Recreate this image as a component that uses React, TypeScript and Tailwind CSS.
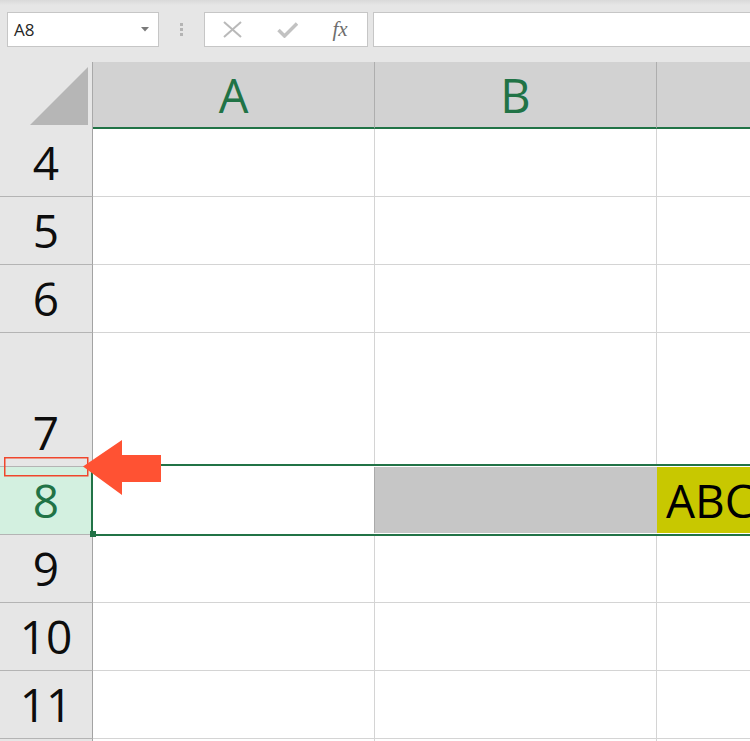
import React from "react";

const GREEN = "#217346";

type Row = { n: number | null; h: string; selected?: boolean };

const rows: Row[] = [
  { n: 4, h: "h-[68px]" },
  { n: 5, h: "h-[68px]" },
  { n: 6, h: "h-[68px]" },
  { n: 7, h: "h-[134px]" },
  { n: 8, h: "h-[68px]", selected: true },
  { n: 9, h: "h-[68px]" },
  { n: 10, h: "h-[68px]" },
  { n: 11, h: "h-[68px]" },
  { n: null, h: "h-[68px]" },
];

function Toolbar() {
  return (
    <div className="flex h-[62px] items-start pt-[12px] pl-[7px] bg-[linear-gradient(to_bottom,#d9d9d9_0px,#e6e6e6_5px)]">
      {/* Name box */}
      <div className="flex h-[35px] w-[152px] items-center justify-between border border-[#c6c6c6] bg-white pl-[6px] pr-[9px]">
        <span className="text-[17px] leading-none text-[#262626]">A8</span>
        <svg width="8" height="5" viewBox="0 0 8 5">
          <polygon points="0,0 8,0 4,4.5" fill="#7a7a7a" />
        </svg>
      </div>
      {/* separator dots */}
      <div className="flex h-[35px] w-[45px] flex-col items-center justify-center gap-[2px]">
        <div className="h-[3px] w-[3px] bg-[#b4b4b4]" />
        <div className="h-[3px] w-[3px] bg-[#b4b4b4]" />
        <div className="h-[3px] w-[3px] bg-[#b4b4b4]" />
      </div>
      {/* cancel / enter / fx */}
      <div className="flex h-[35px] w-[164px] items-center border border-[#c6c6c6] bg-white">
        <div className="flex w-[55px] justify-center">
          <svg width="19" height="17" viewBox="0 0 19 17">
            <line x1="1" y1="1" x2="18" y2="16" stroke="#b9b9b9" strokeWidth="2" />
            <line x1="18" y1="1" x2="1" y2="16" stroke="#b9b9b9" strokeWidth="2" />
          </svg>
        </div>
        <div className="flex w-[55px] justify-center">
          <svg width="21" height="16" viewBox="0 0 21 16">
            <polyline points="1.5,8 7.5,14 20,1.5" fill="none" stroke="#c2c2c2" strokeWidth="3.5" />
          </svg>
        </div>
        <div className="flex w-[50px] justify-center">
          <span className="font-['Liberation_Serif',serif] text-[21px] italic leading-none text-[#6e6e6e]">
            fx
          </span>
        </div>
      </div>
      {/* formula bar */}
      <div className="ml-[5px] h-[35px] flex-1 -mr-[4px] border border-[#c6c6c6] bg-white" />
    </div>
  );
}

function HeaderRow() {
  return (
    <div className="flex h-[67px]">
      <div className="relative w-[93px] shrink-0 bg-[#e6e6e6] border-r border-[#a9a9a9]">
        <svg className="absolute left-0 top-0" width="92" height="67" viewBox="0 0 92 67">
          <polygon points="30,63 88,5 88,63" fill="#b6b6b6" />
        </svg>
      </div>
      {["A", "B"].map((c) => (
        <div
          key={c}
          className="flex w-[282px] shrink-0 items-center justify-center border-r border-[#aeaeae] border-b-2 border-b-[#217346] bg-[#d2d2d2] pt-[2px] text-[47px] leading-none text-[#217346]"
        >
          {c}
        </div>
      ))}
      <div className="flex-1 border-b-2 border-b-[#217346] bg-[#d2d2d2]" />
    </div>
  );
}

function DataRow({ row }: { row: Row }) {
  const sel = !!row.selected;
  return (
    <div className={`flex ${row.h} shrink-0`}>
      <div
        className={`flex w-[93px] shrink-0 items-end justify-center border-r border-r-[#a3a3a3] border-b border-b-[#b4b4b4] pb-[11px] text-[46px] leading-none ${
          sel ? "bg-[#d3f0e0] text-[#217346]" : "bg-[#e6e6e6] text-[#0d0d0d]"
        }`}
      >
        {row.n}
      </div>
      <div
        className={`w-[282px] shrink-0 border-b border-b-[#d4d4d4] border-r ${
          sel ? "border-r-[#a9a9a9] bg-white" : "border-r-[#d4d4d4] bg-white"
        }`}
      />
      <div
        className={`w-[282px] shrink-0 border-b border-b-[#d4d4d4] ${
          sel ? "bg-[#c6c6c6]" : "border-r border-r-[#d4d4d4] bg-white"
        }`}
      />
      <div
        className={`flex min-w-0 flex-1 items-end overflow-hidden whitespace-nowrap border-b border-b-[#d4d4d4] ${
          sel ? "bg-[#c8c800] pl-[9px] pb-[11px] text-[46px] leading-none text-black" : "bg-white"
        }`}
      >
        {sel ? "ABC" : null}
      </div>
    </div>
  );
}

export default function App() {
  return (
    <div className="relative h-[741px] w-[750px] overflow-hidden bg-[#e6e6e6] font-['Open_Sans','Noto_Sans',sans-serif]">
      <Toolbar />
      <HeaderRow />
      <div className="flex flex-col">
        {rows.map((r, i) => (
          <DataRow key={i} row={r} />
        ))}
      </div>

      {/* selection outline */}
      <div
        className="pointer-events-none absolute left-[91px] top-[464px] h-[72px] w-[680px] border-2 shadow-[inset_0_0_0_1px_#ffffff]"
        style={{ borderColor: GREEN }}
      />
      {/* fill handle */}
      <div className="absolute left-[90px] top-[531px] h-[6px] w-[6px] bg-[#217346]" />

      {/* annotation: red rectangle + arrow */}
      <svg className="pointer-events-none absolute left-0 top-[430px]" width="170" height="75" viewBox="0 430 170 75">
        <rect x="4.75" y="457.75" width="83" height="18" fill="none" stroke="#f0462c" strokeWidth="1.5" />
        <polygon
          points="83,466.5 122,440 122,455 161,455 161,482 122,482 122,495"
          fill="#ff5233"
        />
      </svg>
    </div>
  );
}
